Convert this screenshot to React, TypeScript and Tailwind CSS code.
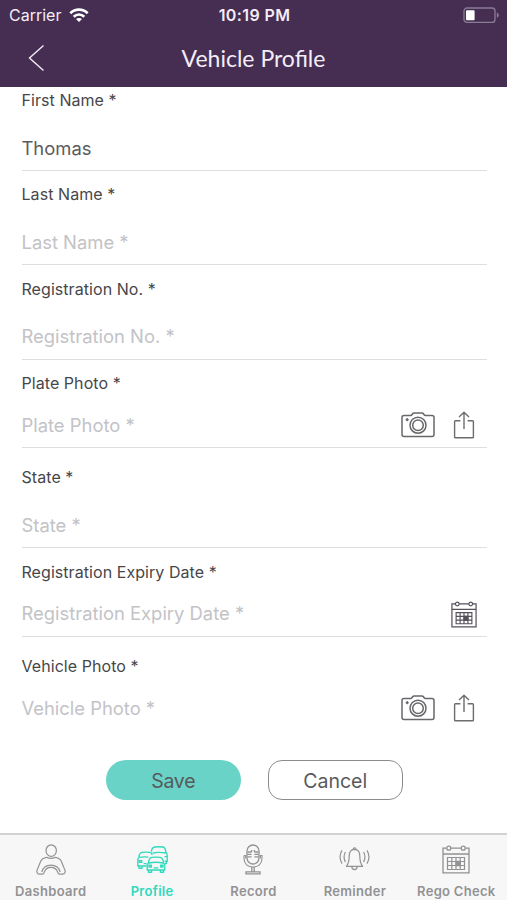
import type { ReactNode } from "react"
import clsx from "clsx"

function WifiIcon() {
  return (
    <svg width="20" height="15" viewBox="0 0 20 15" fill="none" stroke="#fff" strokeWidth="2.6">
      <path d="M1.3 5.2 C6.2 0.4 13.8 0.4 18.7 5.2" />
      <path d="M4.7 8.7 C7.7 5.8 12.3 5.8 15.3 8.7" />
      <path d="M10 14 L7 11 C8.7 9.5 11.3 9.5 13 11 Z" fill="#fff" stroke="none" />
    </svg>
  )
}

function BatteryIcon() {
  return (
    <svg width="37" height="17" viewBox="0 0 37 17" fill="none">
      <rect x="1" y="1" width="31" height="14.4" rx="3" stroke="#8b7c96" strokeWidth="1.3" />
      <rect x="3" y="3.2" width="8.6" height="10" rx="0.8" fill="#fff" />
      <path d="M33.8 5.6 C36.4 6.4 36.4 10 33.8 10.8 Z" fill="#8b7c96" />
    </svg>
  )
}

function CameraIcon() {
  return (
    <svg width="34" height="26" viewBox="0 0 34 26" fill="none" stroke="#68686c" strokeWidth="1.5" strokeLinejoin="round">
      <path d="M3 3.5 H9.6 Q10.4 3.5 10.9 2.8 L11.4 2 Q12 1 13.2 1 H20.8 Q22 1 22.6 2 L23.1 2.8 Q23.6 3.5 24.4 3.5 H31 Q33 3.5 33 5.5 V22.6 Q33 24.6 31 24.6 H3 Q1 24.6 1 22.6 V5.5 Q1 3.5 3 3.5 Z" />
      <circle cx="17" cy="13.2" r="8" />
      <circle cx="17" cy="13.2" r="5.3" />
      <circle cx="6.2" cy="7.7" r="1.1" fill="#68686c" strokeWidth="1" />
    </svg>
  )
}

function ShareIcon() {
  return (
    <svg width="22" height="28" viewBox="0 0 22 28" fill="none" stroke="#6c6c70" strokeWidth="1.4" strokeLinejoin="round">
      <path d="M7.4 9.8 H2.4 Q1.6 9.8 1.6 10.6 V26 Q1.6 26.8 2.4 26.8 H19.6 Q20.4 26.8 20.4 26 V10.6 Q20.4 9.8 19.6 9.8 H14.6" />
      <path d="M11 18 V1.4 M6 6 L11 1.3 L16 6" />
    </svg>
  )
}

function CalendarIcon({ width, height }: { width: number; height: number }) {
  return (
    <svg width={width} height={height} viewBox="0 0 28 29" fill="none" stroke="currentColor" strokeWidth="1.3" preserveAspectRatio="none">
      <path d="M4.8 3.2 H1 V27.8 H27 V3.2 H23.2 M8.8 3.2 H19.2 M1 9 H27" />
      <circle cx="6.8" cy="3.2" r="2" />
      <circle cx="21.2" cy="3.2" r="2" />
      <path d="M5.5 12.5 H22.5 V24.5 H5.5 Z M5.5 16.5 H22.5 M5.5 20.5 H22.5 M9.8 12.5 V24.5 M14 12.5 V24.5 M18.2 12.5 V24.5" strokeWidth="1.2" />
      <path d="M14 16.5 H18.2 V20.5 H14 Z" fill="currentColor" />
    </svg>
  )
}

function DriverIcon() {
  return (
    <svg width="30" height="31" viewBox="0 0 30 31" fill="none" stroke="currentColor" strokeWidth="1.2" strokeLinejoin="round">
      <ellipse cx="15.2" cy="6.6" rx="5.2" ry="5.8" />
      <path d="M10.5 13.3 C7.8 13.9 5.8 14.8 4.8 17 L1 26.4 C0.4 28.5 1.8 30.2 3.6 30.2 H6.6 Q7.6 30.2 8.2 28.4 C9.5 24.5 12 23.4 15 23.4 C18 23.4 20.5 24.5 21.8 28.4 Q22.4 30.2 23.4 30.2 H26.4 C28.2 30.2 29.6 28.5 29 26.4 L25.2 17 C24.2 14.8 22.2 13.9 19.5 13.3 C17 14.6 13 14.6 10.5 13.3 Z" />
      <path d="M5.8 28 C7.2 23.4 10.5 21.2 15 21.2 C19.5 21.2 22.8 23.4 24.2 28" />
    </svg>
  )
}

function CarsIcon() {
  return (
    <svg width="31" height="27" viewBox="0 0 31 27" fill="none" stroke="currentColor" strokeWidth="1.35" strokeLinejoin="round">
      {/* Back right */}
      <path d="M14.4 5.6 C14.7 2.4 15.8 1.2 18 1 Q22 0.6 26 1 C28.2 1.2 28.6 3.2 29 6.6 Q30.2 7.8 30.2 9.4 V15.2 H27.6 M15.6 7 Q22 5.8 28.8 7 M27.4 10.6 H29.8 M29.4 15.4 V17.6 H27.6" />
      {/* Left */}
      <path d="M1.8 11.4 C2.2 8 2.8 6.6 5 6.3 Q9 5.8 13 6.3 Q14.8 6.7 15.2 8.8 M1.8 11.4 Q0.8 12.4 0.8 14 V20 H9.6 M2 20 V22.2 H5 V20 M2.2 11.4 Q7 10.4 11.4 11.2 M2.4 14.6 H4.8 V16.4 H2.4 Z M6.6 17.6 H9.6" />
      {/* Front */}
      <path d="M11.4 17 C11.8 13.4 12.6 11.6 14.8 11.3 Q19 10.8 23.2 11.3 C25.4 11.6 26.2 13.4 26.6 17 Q27.8 18 27.8 19.6 V24 H10.2 V19.6 Q10.2 18 11.4 17 Z M11.8 17 Q19 15.6 26.2 17 M12 19.2 H14.4 V21 H12 Z M23.6 19.2 H26 V21 H23.6 Z M16.6 21.8 H21.4 M11.4 24 V26.2 H14.6 V24 M23.4 24 V26.2 H26.6 V24" />
    </svg>
  )
}

function MicIcon() {
  return (
    <svg width="20" height="31" viewBox="0 0 20 31" fill="none" stroke="currentColor" strokeWidth="1.3">
      <rect x="4" y="1" width="12" height="19" rx="6" />
      <path d="M4.5 8 H8.6 M4.5 10.4 H8.6 M4.5 12.8 H8.6 M15.5 8 H11.4 M15.5 10.4 H11.4 M15.5 12.8 H11.4 M8.6 6 V8 M11.4 6 V8" />
      <path d="M1 11.5 V14.5 C1 20 5 23 10 23 C15 23 19 20 19 14.5 V11.5 H17.4 V14.5 M1 11.5 H2.6 V14.5" strokeWidth="1.1" />
      <path d="M8.8 23 V27.4 M11.2 23 V27.4 M3 29.9 V27.8 H17 V29.9 Z" />
    </svg>
  )
}

function BellIcon() {
  return (
    <svg width="31" height="24" viewBox="0 0 31 24" fill="none" stroke="currentColor" strokeWidth="1.2" strokeLinejoin="round">
      <path d="M15.5 2.4 C11.6 2.6 10.2 5.4 10.2 9 C10.2 14 9.6 16.6 7.4 19.4 H23.6 C21.4 16.6 20.8 14 20.8 9 C20.8 5.4 19.4 2.6 15.5 2.4 Z" />
      <path d="M14 2.5 C14 0.4 17 0.4 17 2.5 M12.8 19.6 C12.8 23.6 18.2 23.6 18.2 19.6" />
      <path d="M6.4 5 C4.8 8 4.8 12 6.4 15 M3 3.4 C0.6 7.4 0.6 12.6 3 16.6 M24.6 5 C26.2 8 26.2 12 24.6 15 M28 3.4 C30.4 7.4 30.4 12.6 28 16.6" />
    </svg>
  )
}

const photoActions = (
  <div className="flex items-center gap-[18px] pr-3">
    <CameraIcon />
    <ShareIcon />
  </div>
)

const dateActions = (
  <div className="pr-2.5 text-[#55505a]">
    <CalendarIcon width={26} height={27} />
  </div>
)

type FieldProps = {
  label: string
  value?: string
  compact?: boolean
  last?: boolean
  actions?: ReactNode
}

function Field({ label, value, compact, last, actions }: FieldProps) {
  return (
    <div className="h-[94.33px]">
      <label className="block h-6 text-[16px] leading-6 tracking-[0.06px] text-[#47474a]">{label}</label>
      <div
        className={clsx(
          "flex items-center justify-between border-b",
          compact ? "h-[53px] pt-[9px]" : "h-[59px] pt-[15px]",
          last ? "border-transparent" : "border-[#dededf]"
        )}
      >
        <span className={clsx("text-[18.4px]", value ? "text-[#5b5b5e]" : "text-[#c3c3c7]")}>
          {value ?? label}
        </span>
        {actions}
      </div>
    </div>
  )
}

const tabs = [
  { label: "Dashboard", icon: <DriverIcon /> },
  { label: "Profile", icon: <CarsIcon />, active: true },
  { label: "Record", icon: <MicIcon /> },
  { label: "Reminder", icon: <BellIcon /> },
  { label: "Rego Check", icon: <CalendarIcon width={28} height={29} /> },
]

export default function App() {
  return (
    <div className="flex h-[900px] w-[507px] flex-col overflow-hidden bg-white font-['Inter','Liberation_Sans',sans-serif]">
      <header className="h-[87px] shrink-0 bg-[#452e52] text-[#f4edf8]">
        {/* Status bar */}
        <div className="grid h-[30px] grid-cols-3 items-center pl-[9px] pr-[7px]">
          <div className="flex items-center gap-2">
            <span className="text-[16px]">Carrier</span>
            <WifiIcon />
          </div>
          <span className="text-center text-[16px] font-semibold tracking-[0.4px]">10:19 PM</span>
          <div className="flex justify-end">
            <BatteryIcon />
          </div>
        </div>
        {/* Title bar */}
        <div className="grid h-[56px] grid-cols-[60px_1fr_60px] items-center">
          <svg className="ml-[28px]" width="17" height="28" viewBox="0 0 17 28" fill="none" stroke="currentColor" strokeWidth="1.4">
            <path d="M15.5 1.5 L1.5 14 L15.5 26.5" />
          </svg>
          <h1 className="text-center font-['Lato',sans-serif] text-[23px]">Vehicle Profile</h1>
        </div>
      </header>

      <main className="flex-1 pl-[21.5px] pr-5 pt-px">
        <Field label="First Name *" value="Thomas" />
        <Field label="Last Name *" />
        <Field label="Registration No. *" />
        <Field label="Plate Photo *" compact actions={photoActions} />
        <Field label="State *" />
        <Field label="Registration Expiry Date *" compact actions={dateActions} />
        <Field label="Vehicle Photo *" compact last actions={photoActions} />
        <div className="mt-[12px] flex justify-center gap-[27px] text-[19.5px] text-[#58595b]">
          <button className="h-10 w-[135px] rounded-full bg-[#68d3c6] pt-0.5 tracking-[-0.3px]">Save</button>
          <button className="h-10 w-[135px] rounded-[14px] border-[1.5px] border-[#8c8c8e] pt-0.5">Cancel</button>
        </div>
      </main>

      <nav className="grid h-[67px] shrink-0 grid-cols-5 border-t-2 border-[#d2d2d3] bg-[#f7f7f7]">
        {tabs.map((tab) => (
          <div key={tab.label} className={clsx("flex flex-col items-center", tab.active ? "text-[#2fd9bd]" : "text-[#929294]")}>
            <div className="flex h-[48px] items-center">{tab.icon}</div>
            <span className="whitespace-nowrap text-[13px] font-semibold leading-4 tracking-[0.3px]">{tab.label}</span>
          </div>
        ))}
      </nav>
    </div>
  )
}
